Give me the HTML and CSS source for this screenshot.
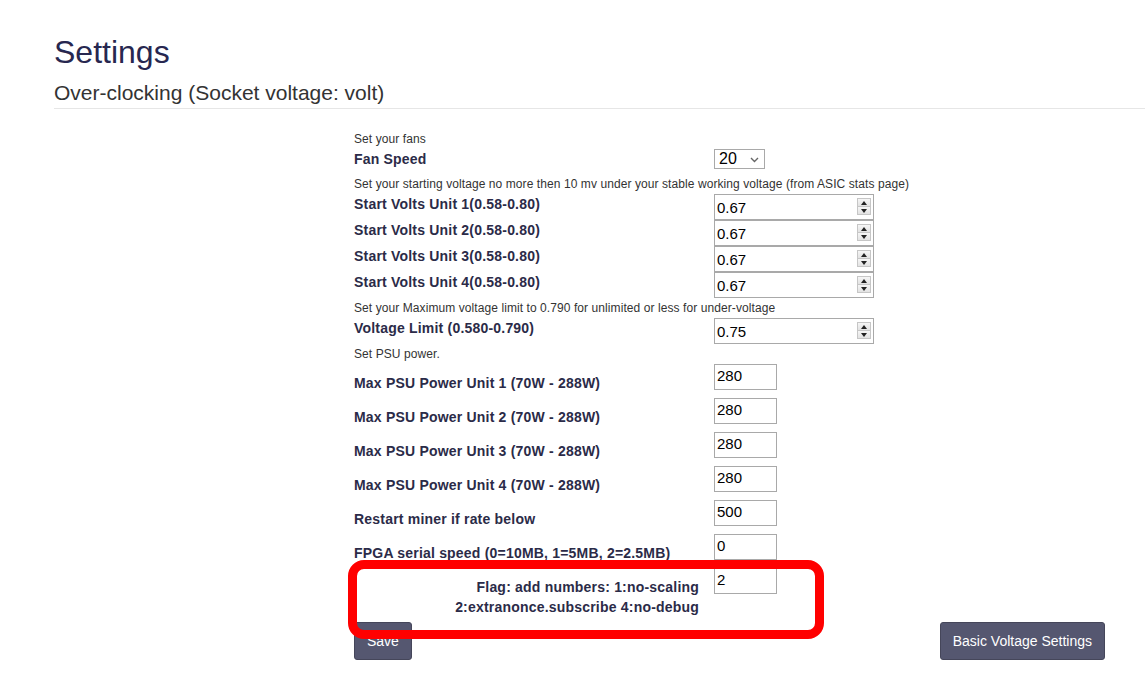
FILE: index.html
```html
<!DOCTYPE html>
<html>
<head>
<meta charset="utf-8">
<title>Settings</title>
<link rel="stylesheet" href="styles.css">
</head>
<body>
<div class="page">
  <h1 class="title">Settings</h1>
  <h2 class="subtitle">Over-clocking (Socket voltage: volt)</h2>
</div>
<div class="rule"></div>
<form class="form">
  <div class="desc">Set your fans</div>
  <div class="row row-fan">
    <label class="label">Fan Speed</label>
    <div class="select"><span>20</span><svg class="chev" width="9" height="6" viewBox="0 0 9 6"><path d="M1 1 L4.5 4.5 L8 1" fill="none" stroke="#666" stroke-width="1.4"/></svg></div>
  </div>
  <div class="desc">Set your starting voltage no more then 10 mv under your stable working voltage (from ASIC stats page)</div>
  <div class="row">
    <label class="label">Start Volts Unit 1(0.58-0.80)</label>
    <div class="num"><span class="val">0.67</span><span class="spin"><span class="up"></span><span class="dn"></span></span></div>
  </div>
  <div class="row">
    <label class="label">Start Volts Unit 2(0.58-0.80)</label>
    <div class="num"><span class="val">0.67</span><span class="spin"><span class="up"></span><span class="dn"></span></span></div>
  </div>
  <div class="row">
    <label class="label">Start Volts Unit 3(0.58-0.80)</label>
    <div class="num"><span class="val">0.67</span><span class="spin"><span class="up"></span><span class="dn"></span></span></div>
  </div>
  <div class="row">
    <label class="label">Start Volts Unit 4(0.58-0.80)</label>
    <div class="num"><span class="val">0.67</span><span class="spin"><span class="up"></span><span class="dn"></span></span></div>
  </div>
  <div class="desc">Set your Maximum voltage limit to 0.790 for unlimited or less for under-voltage</div>
  <div class="row">
    <label class="label">Voltage Limit (0.580-0.790)</label>
    <div class="num"><span class="val">0.75</span><span class="spin"><span class="up"></span><span class="dn"></span></span></div>
  </div>
  <div class="desc">Set PSU power.</div>
  <div class="row row-psu">
    <label class="label">Max PSU Power Unit 1 (70W - 288W)</label>
    <div class="txt">280</div>
  </div>
  <div class="row row-psu">
    <label class="label">Max PSU Power Unit 2 (70W - 288W)</label>
    <div class="txt">280</div>
  </div>
  <div class="row row-psu">
    <label class="label">Max PSU Power Unit 3 (70W - 288W)</label>
    <div class="txt">280</div>
  </div>
  <div class="row row-psu">
    <label class="label">Max PSU Power Unit 4 (70W - 288W)</label>
    <div class="txt">280</div>
  </div>
  <div class="row row-psu">
    <label class="label">Restart miner if rate below</label>
    <div class="txt">500</div>
  </div>
  <div class="row row-psu">
    <label class="label">FPGA serial speed (0=10MB, 1=5MB, 2=2.5MB)</label>
    <div class="txt">0</div>
  </div>
  <div class="row row-psu row-flag">
    <label class="label label-right">Flag: add numbers: 1:no-scaling<br>2:extranonce.subscribe 4:no-debug</label>
    <div class="txt">2</div>
  </div>
  <div class="actions">
    <button type="button" class="btn">Save</button>
    <button type="button" class="btn">Basic Voltage Settings</button>
  </div>
</form>
<div class="highlight"></div>
</body>
</html>
```
FILE: styles.css
```css
html, body {
  margin: 0;
  padding: 0;
  background: #fff;
}
body {
  position: relative;
  width: 1145px;
  height: 682px;
  overflow: hidden;
  font-family: "Liberation Sans", Arial, sans-serif;
  color: #2b2b48;
}
.page {
  padding-left: 54px;
  padding-top: 34px;
}
.title {
  margin: 0;
  font-size: 32px;
  line-height: 36px;
  font-weight: normal;
  color: #272750;
}
.subtitle {
  margin: 11px 0 0 0;
  font-size: 21px;
  line-height: 24px;
  font-weight: normal;
  color: #333;
}
.rule {
  margin: 3px 0 0 54px;
  border-top: 1px solid #e6e6e6;
}
.form {
  margin: 20px 0 0 354px;
  width: 751px;
}
.desc {
  font-size: 12px;
  line-height: 20px;
  color: #333;
  white-space: nowrap;
  letter-spacing: 0.08px;
}
.row {
  display: flex;
  align-items: flex-start;
}
.row-fan {
  margin-bottom: 5px;
}
.label {
  width: 345px;
  padding-right: 15px;
  font-size: 14px;
  line-height: 20px;
  font-weight: bold;
  letter-spacing: 0.2px;
  color: #2b2b48;
}
.label-right {
  text-align: right;
}
.row-psu {
  margin-bottom: 5px;
}
.row-psu .label {
  padding-top: 9px;
}
.select {
  height: 18px;
  border: 1px solid #a9a9a9;
  display: flex;
  align-items: center;
  justify-content: space-between;
  padding: 0 5px 0 4px;
  box-sizing: content-box;
  width: 40px;
  font-size: 16px;
  color: #000;
}
.chev {
  margin-top: 1px;
}
.num {
  position: relative;
  width: 158px;
  height: 24px;
  border: 1px solid #a9a9a9;
  display: flex;
  align-items: center;
  font-size: 15px;
  color: #000;
}
.val {
  padding-left: 2px;
  padding-top: 1px;
}
.spin {
  position: absolute;
  right: 2px;
  top: 3px;
  width: 14px;
  height: 17px;
  display: flex;
  flex-direction: column;
  border: 1px solid #c6c6c6;
  background: #f0f0f0;
  box-sizing: border-box;
}
.spin .up, .spin .dn {
  flex: 1;
  position: relative;
  background: linear-gradient(#f6f6f6, #e2e2e2);
}
.spin .up {
  border-bottom: 1px solid #c6c6c6;
}
.spin .up::after, .spin .dn::after {
  content: "";
  position: absolute;
  left: 3px;
  width: 0;
  height: 0;
  border-left: 3px solid transparent;
  border-right: 3px solid transparent;
}
.spin .up::after {
  top: 2px;
  border-bottom: 4px solid #222;
}
.spin .dn::after {
  top: 2px;
  border-top: 4px solid #222;
}
.txt {
  width: 59px;
  height: 24px;
  border: 1px solid #a9a9a9;
  padding-left: 2px;
  font-size: 15px;
  line-height: 22px;
  color: #000;
}
.actions {
  display: flex;
  justify-content: space-between;
}
.btn {
  height: 38px;
  padding: 0 12px;
  border: 1px solid #45465a;
  border-radius: 3px;
  background: #555770;
  color: #fff;
  font-family: "Liberation Sans", Arial, sans-serif;
  font-size: 14px;
}
.highlight {
  position: absolute;
  left: 348px;
  top: 560px;
  width: 476px;
  height: 79px;
  box-sizing: border-box;
  border: 9px solid #ff0000;
  border-radius: 16px;
  pointer-events: none;
}
```
